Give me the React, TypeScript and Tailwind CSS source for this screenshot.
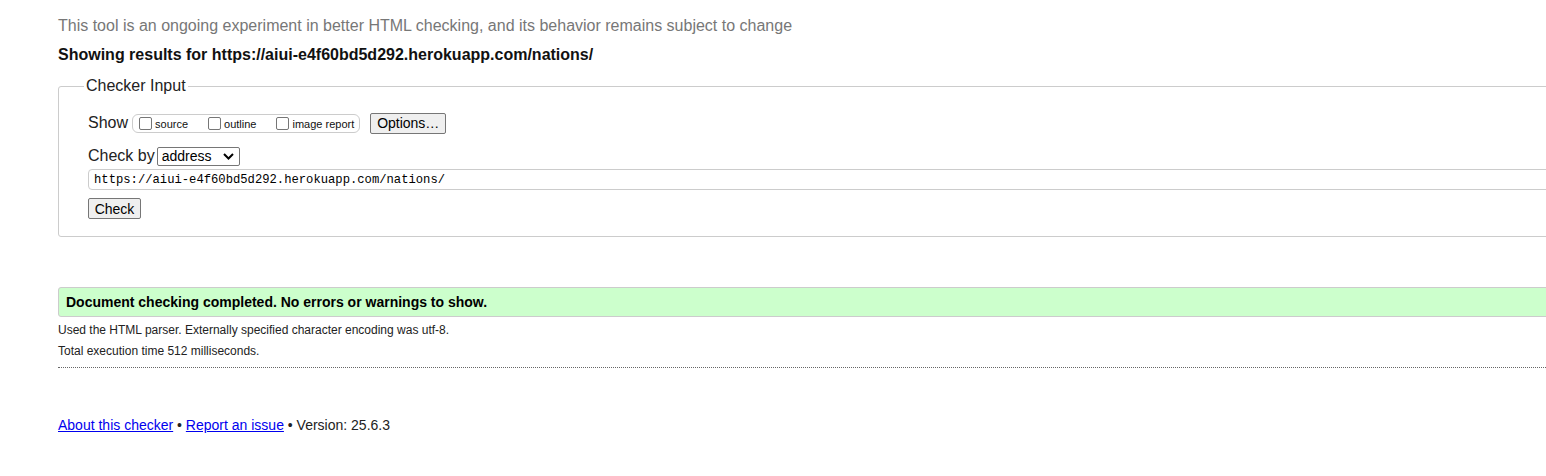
import React from "react";

const sans = "font-['Liberation_Sans',Arial,sans-serif]";

function Checkbox({ label }: { label: string }) {
  return (
    <label className="flex items-center">
      <span className="ml-[4px] mr-[3px] h-[13px] w-[13px] rounded-[2px] border border-[#767676] bg-white" />
      <span className="mt-[3px] text-[11px] leading-[13px] text-[#111]">{label}</span>
    </label>
  );
}

function NativeButton({ children, width }: { children: React.ReactNode; width: string }) {
  return (
    <button
      className={`flex h-[21px] items-center justify-center rounded-[2px] border border-[#767676] bg-[#efefef] text-[14px] leading-[16px] text-black ${width}`}
    >
      {children}
    </button>
  );
}

export default function App() {
  return (
    <div className={`w-[1546px] h-[476px] overflow-hidden bg-white ${sans} text-[#222]`}>
      <div className="w-[1560px] pl-[58px] pt-[17px]">
        <p className="text-[16px] leading-[18px] text-[#777]">
          This tool is an ongoing experiment in better HTML checking, and its behavior remains subject to change
        </p>
        <p className="mt-[11px] text-[16px] font-bold leading-[18px] text-[#111]">
          Showing results for https://aiui-e4f60bd5d292.herokuapp.com/nations/
        </p>

        <fieldset className="mt-[13px] rounded-[3px] border border-[#cccccc] pl-[29px] pb-[17px]">
          <legend className="ml-[-4px] px-[2px] text-[16px] leading-[18px] text-[#222]">Checker Input</legend>

          <div className="mt-[18px] flex h-[20px] items-center">
            <span className="text-[16px] leading-[18px]">Show</span>
            <div className="ml-[4px] flex h-[19px] items-center gap-[16px] rounded-[6px] border border-[#cccccc] pl-[2px] pr-[5px]">
              <Checkbox label="source" />
              <Checkbox label="outline" />
              <Checkbox label="image report" />
            </div>
            <div className="ml-[10px]">
              <NativeButton width="w-[76px]">Options…</NativeButton>
            </div>
          </div>

          <div className="mt-[13px] flex h-[20px] items-center">
            <span className="text-[16px] leading-[18px]">Check by</span>
            <div className="ml-[2px] flex h-[19px] w-[83px] items-center justify-between rounded-[2px] border border-[#767676] bg-white pl-[4px] pr-[5px]">
              <span className="text-[14px] leading-[16px] text-black">address</span>
              <svg width="11" height="7" viewBox="0 0 11 7" fill="none">
                <path d="M1 1l4.5 4.5L10 1" stroke="#000" strokeWidth="2" />
              </svg>
            </div>
          </div>

          <div className="mt-[3px] flex h-[21px] items-center rounded-[4px] border border-[#cccccc] pl-[5px]">
            <span className="font-['Liberation_Mono',monospace] text-[12.2px] leading-[14px] text-black">
              https://aiui-e4f60bd5d292.herokuapp.com/nations/
            </span>
          </div>

          <div className="mt-[8px]">
            <NativeButton width="w-[53px]">Check</NativeButton>
          </div>
        </fieldset>

        <div className="mt-[50px] flex h-[30px] items-center rounded-[3px] border border-[#cccccc] bg-[#ccffcc] pl-[7px]">
          <span className="text-[14px] font-bold leading-[16px] text-black">
            Document checking completed. No errors or warnings to show.
          </span>
        </div>

        <p className="mt-[6px] text-[12px] leading-[14px]">
          Used the HTML parser. Externally specified character encoding was utf-8.
        </p>
        <p className="mt-[7px] text-[12px] leading-[14px]">Total execution time 512 milliseconds.</p>
        <div className="mt-[9px] border-t border-dotted border-[#666]" />

        <p className="mt-[49px] text-[14px] leading-[16px] text-[#222]">
          <a href="#" className="text-[#0000ee] underline">About this checker</a> •{" "}
          <a href="#" className="text-[#0000ee] underline">Report an issue</a> • Version: 25.6.3
        </p>
      </div>
    </div>
  );
}
